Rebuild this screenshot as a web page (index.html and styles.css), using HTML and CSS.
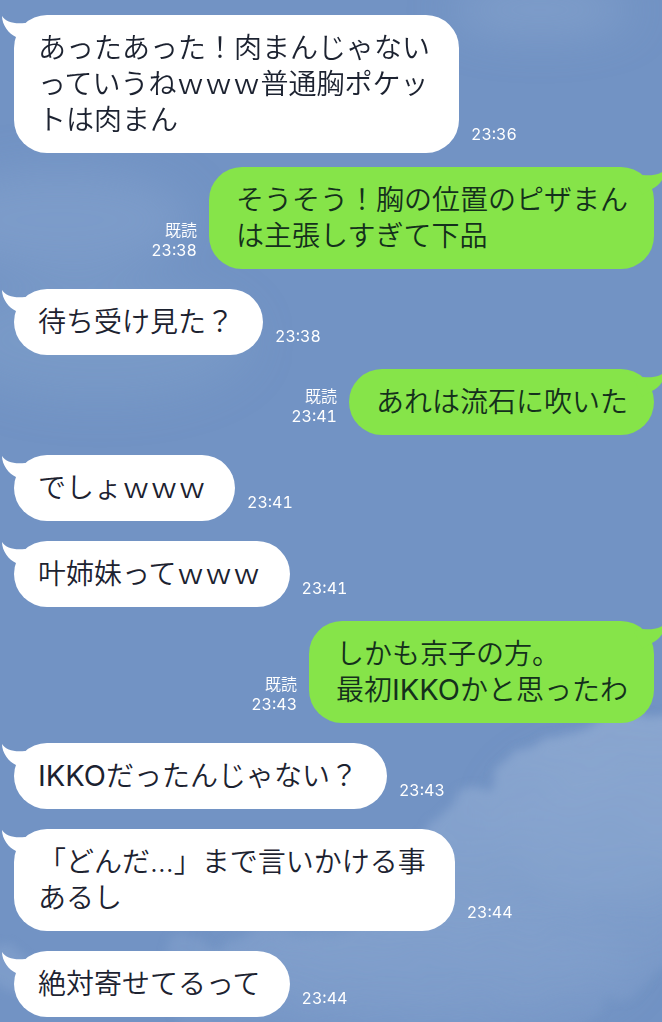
FILE: index.html
```html
<!DOCTYPE html>
<html lang="ja">
<head>
    <meta charset="UTF-8">
    <meta name="viewport" content="width=device-width, initial-scale=1.0">
    <title>トーク</title>
    <link rel="stylesheet" href="styles.css">
</head>
<body>
    <svg class="sky" viewBox="0 0 662 1022" preserveAspectRatio="xMidYMid slice" aria-hidden="true">
        <defs>
            <filter id="cloud" x="-20%" y="-20%" width="140%" height="140%">
                <feTurbulence type="fractalNoise" baseFrequency="0.02" numOctaves="4" seed="4" result="noise"/>
                <feDisplacementMap in="SourceGraphic" in2="noise" scale="40" result="rough"/>
                <feGaussianBlur in="rough" stdDeviation="5"/>
            </filter>
            <filter id="haze" x="-50%" y="-50%" width="200%" height="200%">
                <feGaussianBlur stdDeviation="22"/>
            </filter>
            <linearGradient id="cloudFill" x1="0" y1="0" x2="0" y2="1">
                <stop offset="0" stop-color="#8faad1" stop-opacity="0.85"/>
                <stop offset="0.5" stop-color="#88a5cf" stop-opacity="0.7"/>
                <stop offset="1" stop-color="#7c9bca" stop-opacity="0.3"/>
            </linearGradient>
        </defs>
        <rect width="662" height="1022" fill="#7293c4"/>
        <g filter="url(#haze)" fill="#88a5cf">
            <ellipse cx="60" cy="220" rx="130" ry="50" opacity="0.5"/>
            <ellipse cx="100" cy="340" rx="150" ry="60" opacity="0.35"/>
            <ellipse cx="540" cy="10" rx="90" ry="24" opacity="0.6"/>
            <ellipse cx="430" cy="960" rx="200" ry="60" opacity="0.5"/>
            <ellipse cx="610" cy="820" rx="110" ry="70" opacity="0.4"/>
        </g>
        <path filter="url(#cloud)" fill="url(#cloudFill)" d="M720 700 L620 720 L550 735 L520 765 L470 795 L430 830 L380 920 L320 935 L180 940 L170 1060 L560 1060 L600 1000 L720 960 Z"/>
        <path filter="url(#cloud)" fill="#88a5cf" opacity="0.5" d="M-20 940 L10 945 L35 965 L20 990 L-20 990 Z"/>
    </svg>

    <!-- shared bubble tail, flipped for sent messages -->
    <svg class="sprite" aria-hidden="true">
        <symbol id="tail" viewBox="0 0 32 28">
            <path d="M0 1 C4 7 11 9 23 8 L32 10 L24 28 L14 22 C7 19 0 10 0 1 Z"/>
        </symbol>
    </svg>

    <main class="chat">
        <div class="message received">
            <div class="bubble">
                <svg class="tail" aria-hidden="true"><use href="#tail"/></svg>
                <p>あったあった！肉まんじゃない<br>っていうねｗｗｗ普通胸ポケッ<br>トは肉まん</p>
            </div>
            <div class="meta"><time>23:36</time></div>
        </div>
        <div class="message sent">
            <div class="bubble">
                <svg class="tail" aria-hidden="true"><use href="#tail"/></svg>
                <p>そうそう！胸の位置のピザまん<br>は主張しすぎて下品</p>
            </div>
            <div class="meta"><span>既読</span><time>23:38</time></div>
        </div>
        <div class="message received">
            <div class="bubble">
                <svg class="tail" aria-hidden="true"><use href="#tail"/></svg>
                <p>待ち受け見た？</p>
            </div>
            <div class="meta"><time>23:38</time></div>
        </div>
        <div class="message sent">
            <div class="bubble">
                <svg class="tail" aria-hidden="true"><use href="#tail"/></svg>
                <p>あれは流石に吹いた</p>
            </div>
            <div class="meta"><span>既読</span><time>23:41</time></div>
        </div>
        <div class="message received">
            <div class="bubble">
                <svg class="tail" aria-hidden="true"><use href="#tail"/></svg>
                <p>でしょｗｗｗ</p>
            </div>
            <div class="meta"><time>23:41</time></div>
        </div>
        <div class="message received">
            <div class="bubble">
                <svg class="tail" aria-hidden="true"><use href="#tail"/></svg>
                <p>叶姉妹ってｗｗｗ</p>
            </div>
            <div class="meta"><time>23:41</time></div>
        </div>
        <div class="message sent">
            <div class="bubble">
                <svg class="tail" aria-hidden="true"><use href="#tail"/></svg>
                <p>しかも京子の方。<br>最初<span class="latin">IKKO</span>かと思ったわ</p>
            </div>
            <div class="meta"><span>既読</span><time>23:43</time></div>
        </div>
        <div class="message received">
            <div class="bubble">
                <svg class="tail" aria-hidden="true"><use href="#tail"/></svg>
                <p><span class="latin">IKKO</span>だったんじゃない？</p>
            </div>
            <div class="meta"><time>23:43</time></div>
        </div>
        <div class="message received">
            <div class="bubble">
                <svg class="tail" aria-hidden="true"><use href="#tail"/></svg>
                <p>「どんだ…」まで言いかける事<br>あるし</p>
            </div>
            <div class="meta"><time>23:44</time></div>
        </div>
        <div class="message received">
            <div class="bubble">
                <svg class="tail" aria-hidden="true"><use href="#tail"/></svg>
                <p>絶対寄せてるって</p>
            </div>
            <div class="meta"><time>23:44</time></div>
        </div>
    </main>
</body>
</html>
```
FILE: styles.css
```css
* {
    box-sizing: border-box;
}
body {
    margin: 0;
    overflow-x: hidden;
    background-color: #7293c4;
    font-family: Inter, "Noto Sans CJK JP", sans-serif;
}
.sky {
    position: fixed;
    top: 0;
    left: 0;
    width: 100%;
    height: 100%;
    z-index: -1;
}
.sprite {
    display: none;
}

.chat {
    padding: 15px 8px 5px 14px;
}
.message {
    display: flex;
    align-items: flex-end;
    gap: 12px;
    margin-top: 20px;
}
.message:first-child {
    margin-top: 0;
}
.message.sent {
    flex-direction: row-reverse;
    margin-top: 14px;
}

.bubble {
    position: relative;
    padding: 15px 29px 15px 24px;
    border-radius: 33px;
    background-color: #fff;
    color: #1c2230;
    font-size: 28px;
    font-weight: 350;
    line-height: 36px;
}
.bubble p {
    margin: 0;
}
.latin {
    font-size: 29px;
    font-weight: 400;
}
.sent .bubble {
    padding: 15px 26px 15px 27px;
    background-color: #86e449;
    color: #14301c;
}
.tail {
    position: absolute;
    top: 0;
    left: -12px;
    width: 32px;
    height: 28px;
    fill: #fff;
}
.sent .tail {
    left: auto;
    right: -12px;
    fill: #86e449;
    transform: scaleX(-1);
}

.meta {
    display: flex;
    flex-direction: column;
    align-items: flex-end;
    padding-bottom: 9px;
    color: #fff;
    font-size: 16px;
    font-variant-numeric: tabular-nums;
    line-height: 20px;
}
.meta span {
    font-weight: 350;
}
```
